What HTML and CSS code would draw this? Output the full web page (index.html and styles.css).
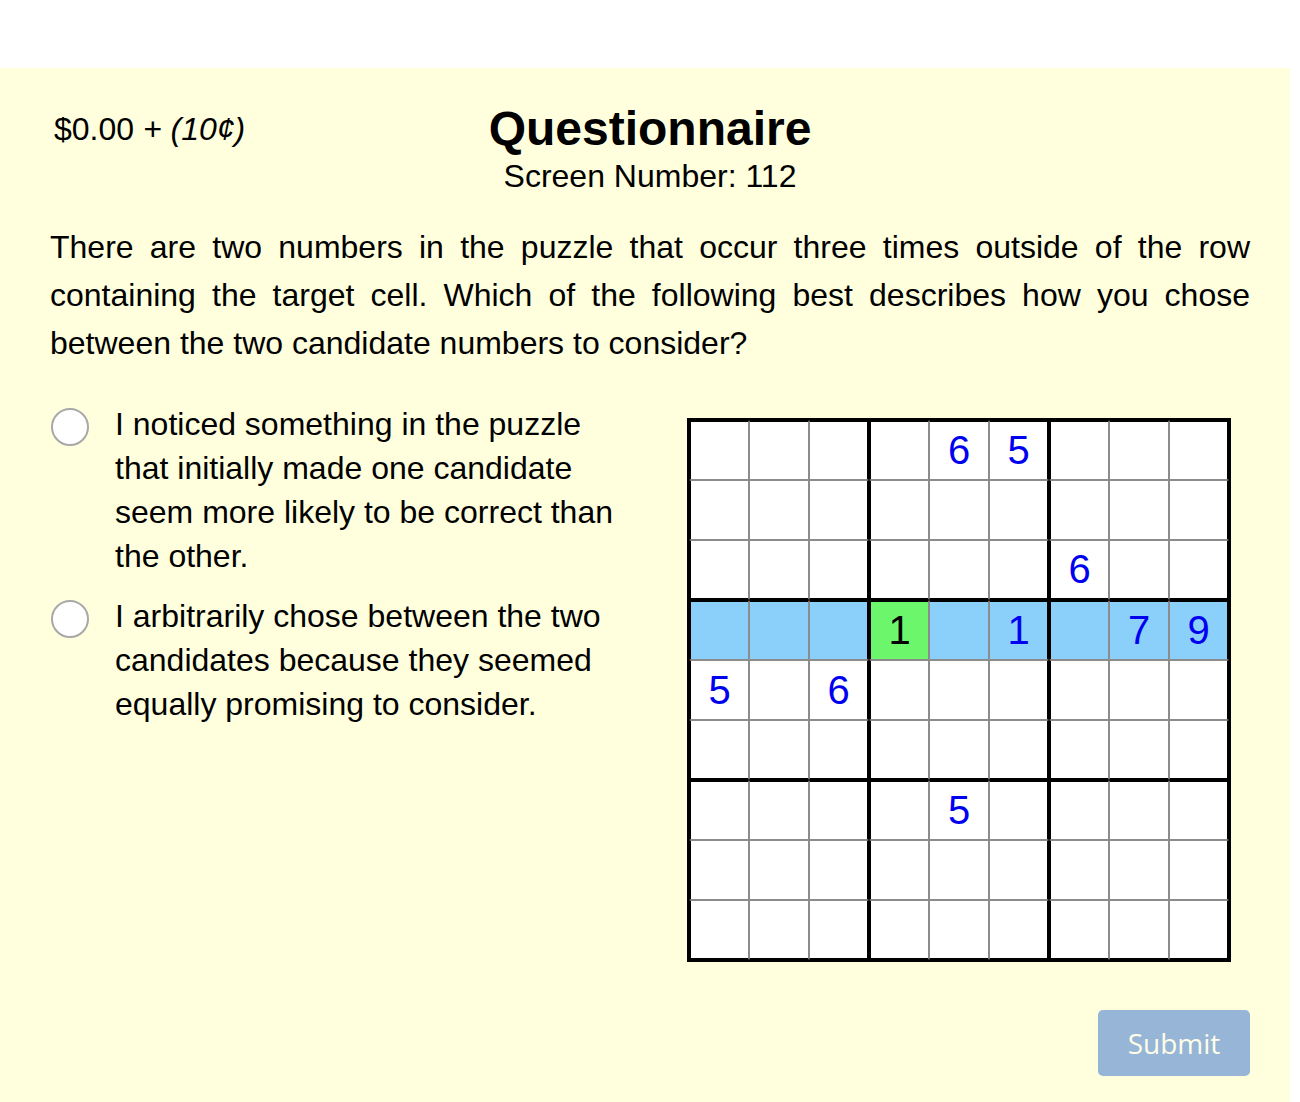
FILE: index.html
```html
<!DOCTYPE html>
<html lang="en">
<head>
<meta charset="utf-8">
<title>Questionnaire</title>
<link rel="stylesheet" href="styles.css">
</head>
<body>
<div class="panel">
  <header class="header">
    <div class="money">$0.00 <em>+ (10¢)</em></div>
    <div class="titles">
      <h1 class="title">Questionnaire</h1>
      <div class="screen">Screen Number: 112</div>
    </div>
    <div></div>
  </header>
  <p class="question">There are two numbers in the puzzle that occur three times outside of the row containing the target cell. Which of the following best describes how you chose between the two candidate numbers to consider?</p>
  <div class="body">
    <div class="options">
      <label class="option"><input type="radio" name="q" class="radio"><span>I noticed something in the puzzle that initially made one candidate seem more likely to be correct than the other.</span></label>
      <label class="option"><input type="radio" name="q" class="radio"><span>I arbitrarily chose between the two candidates because they seemed equally promising to consider.</span></label>
    </div>
    <div class="sudoku">
      <div class="c r1 k1"></div><div class="c r1 k2"></div><div class="c r1 k3"></div><div class="c r1 k4"></div><div class="c r1 k5">6</div><div class="c r1 k6">5</div><div class="c r1 k7"></div><div class="c r1 k8"></div><div class="c r1 k9"></div>
      <div class="c k1"></div><div class="c k2"></div><div class="c k3"></div><div class="c k4"></div><div class="c k5"></div><div class="c k6"></div><div class="c k7"></div><div class="c k8"></div><div class="c k9"></div>
      <div class="c r3 k1"></div><div class="c r3 k2"></div><div class="c r3 k3"></div><div class="c r3 k4"></div><div class="c r3 k5"></div><div class="c r3 k6"></div><div class="c r3 k7">6</div><div class="c r3 k8"></div><div class="c r3 k9"></div>
      <div class="c r4 k1 hl"></div><div class="c r4 k2 hl"></div><div class="c r4 k3 hl"></div><div class="c r4 k4 target">1</div><div class="c r4 k5 hl"></div><div class="c r4 k6 hl">1</div><div class="c r4 k7 hl"></div><div class="c r4 k8 hl">7</div><div class="c r4 k9 hl">9</div>
      <div class="c k1">5</div><div class="c k2"></div><div class="c k3">6</div><div class="c k4"></div><div class="c k5"></div><div class="c k6"></div><div class="c k7"></div><div class="c k8"></div><div class="c k9"></div>
      <div class="c r6 k1"></div><div class="c r6 k2"></div><div class="c r6 k3"></div><div class="c r6 k4"></div><div class="c r6 k5"></div><div class="c r6 k6"></div><div class="c r6 k7"></div><div class="c r6 k8"></div><div class="c r6 k9"></div>
      <div class="c r7 k1"></div><div class="c r7 k2"></div><div class="c r7 k3"></div><div class="c r7 k4"></div><div class="c r7 k5">5</div><div class="c r7 k6"></div><div class="c r7 k7"></div><div class="c r7 k8"></div><div class="c r7 k9"></div>
      <div class="c k1"></div><div class="c k2"></div><div class="c k3"></div><div class="c k4"></div><div class="c k5"></div><div class="c k6"></div><div class="c k7"></div><div class="c k8"></div><div class="c k9"></div>
      <div class="c r9 k1"></div><div class="c r9 k2"></div><div class="c r9 k3"></div><div class="c r9 k4"></div><div class="c r9 k5"></div><div class="c r9 k6"></div><div class="c r9 k7"></div><div class="c r9 k8"></div><div class="c r9 k9"></div>
    </div>
  </div>
  <div class="actions">
    <button class="submit" type="button">Submit</button>
  </div>
</div>
</body>
</html>
```

FILE: styles.css
```css
html, body {
  margin: 0;
  padding: 0;
  background: #ffffff;
}

body {
  font-family: "Liberation Sans", Arial, Helvetica, sans-serif;
  color: #000;
  overflow: hidden;
}

.panel {
  box-sizing: border-box;
  margin-top: 68px;
  width: 1290px;
  height: 1034px;
  background: #ffffdd;
  padding: 28px 40px 0 50px;
}

.header {
  display: grid;
  grid-template-columns: 1fr auto 1fr;
  align-items: start;
}

.money {
  font-size: 32px;
  line-height: 40px;
  margin-top: 13px;
  padding-left: 4px;
}

.money em {
  font-style: italic;
}

.titles {
  text-align: center;
  padding-top: 5px;
}

.title {
  margin: 0;
  font-size: 48px;
  line-height: 56px;
  font-weight: bold;
}

.screen {
  margin-top: 1px;
  font-size: 32px;
  line-height: 36px;
}

.question {
  margin: 29px 0 0 0;
  font-size: 32px;
  line-height: 48px;
  text-align: justify;
}

.body {
  display: flex;
  align-items: flex-start;
  margin-top: 35px;
}

.options {
  width: 580px;
  display: flex;
  flex-direction: column;
  gap: 16px;
}

.option {
  display: flex;
  align-items: flex-start;
  gap: 26px;
  font-size: 32px;
  line-height: 44px;
  cursor: pointer;
}

.radio {
  appearance: none;
  -webkit-appearance: none;
  flex: 0 0 auto;
  box-sizing: border-box;
  width: 38px;
  height: 38px;
  margin: 6px 0 0 1px;
  border: 2px solid #a8a8a8;
  border-radius: 50%;
  background: #ffffff;
}

.sudoku {
  margin-left: auto;
  margin-right: 19px;
  margin-top: 16px;
  display: grid;
  grid-template-columns: repeat(9, 60px);
  grid-template-rows: repeat(9, 60px);
  border: 2px solid #000;
  background: #fff;
}

.c {
  box-sizing: border-box;
  border: 1px solid #8c8c8c;
  display: flex;
  align-items: center;
  justify-content: center;
  font-size: 40px;
  color: #0000f0;
  background: #fff;
}

.k1, .k4, .k7 { border-left: 2px solid #000; }
.k3, .k6, .k9 { border-right: 2px solid #000; }
.r1, .r4, .r7 { border-top: 2px solid #000; }
.r3, .r6, .r9 { border-bottom: 2px solid #000; }

.hl {
  background: #8ad0fa;
}

.target {
  background: #6cf66c;
  color: #000;
}

.actions {
  display: flex;
  justify-content: flex-end;
  margin-top: 48px;
}

.submit {
  width: 152px;
  height: 66px;
  border: none;
  border-radius: 5px;
  background: #97b5d6;
  color: #fdfde8;
  font-family: "Open Sans", "Noto Sans", sans-serif;
  font-size: 28px;
  padding: 0;
}
```
